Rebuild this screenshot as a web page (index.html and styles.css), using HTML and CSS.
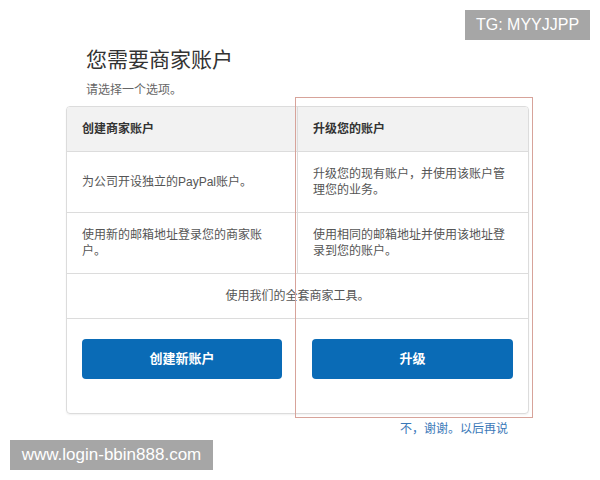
FILE: index.html
```html
<!DOCTYPE html>
<html lang="zh">
<head>
<meta charset="utf-8">
<link rel="stylesheet" href="styles.css">
</head>
<body>
<div class="page">
  <div class="tg">TG: MYYJJPP</div>
  <div class="main">
    <h1 class="title">您需要商家账户</h1>
    <p class="subtitle">请选择一个选项。</p>
    <div class="card">
      <div class="row head">
        <div class="cell">创建商家账户</div>
        <div class="cell">升级您的账户</div>
      </div>
      <div class="row">
        <div class="cell">为公司开设独立的PayPal账户。</div>
        <div class="cell">升级您的现有账户，并使用该账户管理您的业务。</div>
      </div>
      <div class="row">
        <div class="cell">使用新的邮箱地址登录您的商家账户。</div>
        <div class="cell">使用相同的邮箱地址并使用该地址登录到您的账户。</div>
      </div>
      <div class="row full">
        <div class="cell">使用我们的全套商家工具。</div>
      </div>
      <div class="row btns">
        <div class="cell"><span class="btn">创建新账户</span></div>
        <div class="cell"><span class="btn">升级</span></div>
      </div>
    </div>
    <div class="later">不，谢谢。以后再说</div>
    <div class="highlight"></div>
  </div>
  <div class="site">www.login-bbin888.com</div>
</div>
</body>
</html>
```
FILE: styles.css
```css
html, body {
  margin: 0;
  padding: 0;
  background: #fff;
}
* {
  box-sizing: border-box;
}
body {
  font-family: "Liberation Sans", "Noto Sans CJK SC", sans-serif;
  width: 600px;
  height: 480px;
  overflow: hidden;
}
.page {
  position: relative;
  width: 600px;
  height: 480px;
}
.tg {
  position: absolute;
  left: 465px;
  top: 10px;
  width: 125px;
  height: 30px;
  background: #a6a6a6;
  color: #fff;
  font-size: 16px;
  line-height: 30px;
  text-align: center;
}
.site {
  position: absolute;
  left: 10px;
  top: 440px;
  width: 203px;
  height: 30px;
  background: #a6a6a6;
  color: #fff;
  font-size: 17px;
  line-height: 30px;
  text-align: center;
}
.main {
  position: relative;
  padding: 46px 0 0 66px;
}
.title {
  margin: 0 0 0 20px;
  font-size: 21px;
  font-weight: normal;
  color: #333;
  line-height: 28px;
}
.subtitle {
  margin: 8px 0 0 20px;
  font-size: 12px;
  color: #666;
  line-height: 16px;
}
.card {
  margin-top: 8px;
  width: 463px;
  border: 1px solid #dcdcdc;
  border-radius: 4px;
  overflow: hidden;
  box-shadow: 0 1px 2px rgba(0,0,0,0.06);
}
.row {
  display: grid;
  grid-template-columns: 230px 231px;
  border-top: 1px solid #dcdcdc;
}
.row:first-child {
  border-top: none;
}
.cell {
  padding: 0 15px;
  font-size: 12px;
  line-height: 16px;
  color: #555;
  display: flex;
  align-items: center;
  min-height: 60px;
}
.cell + .cell {
  border-left: 1px solid #dcdcdc;
}
.head .cell {
  min-height: 44px;
  background: #f2f2f2;
  font-weight: bold;
  color: #333;
}
.full {
  grid-template-columns: 1fr;
}
.full .cell {
  min-height: 44px;
  justify-content: center;
}
.btns .cell {
  min-height: 94px;
  border-left: none;
  align-items: flex-start;
  padding-top: 20px;
}
.btn {
  display: block;
  width: 202px;
  height: 40px;
  line-height: 40px;
  background: #0a6bb6;
  border-radius: 4px;
  color: #fff;
  font-weight: bold;
  font-size: 13px;
  text-align: center;
}
.later {
  width: 442px;
  text-align: right;
  margin-top: 7px;
  font-size: 12px;
  color: #3a78b8;
  line-height: 16px;
}
.highlight {
  position: absolute;
  left: 295px;
  top: 97px;
  width: 238px;
  height: 321px;
  border: 1px solid #d7a39a;
  pointer-events: none;
}
```
